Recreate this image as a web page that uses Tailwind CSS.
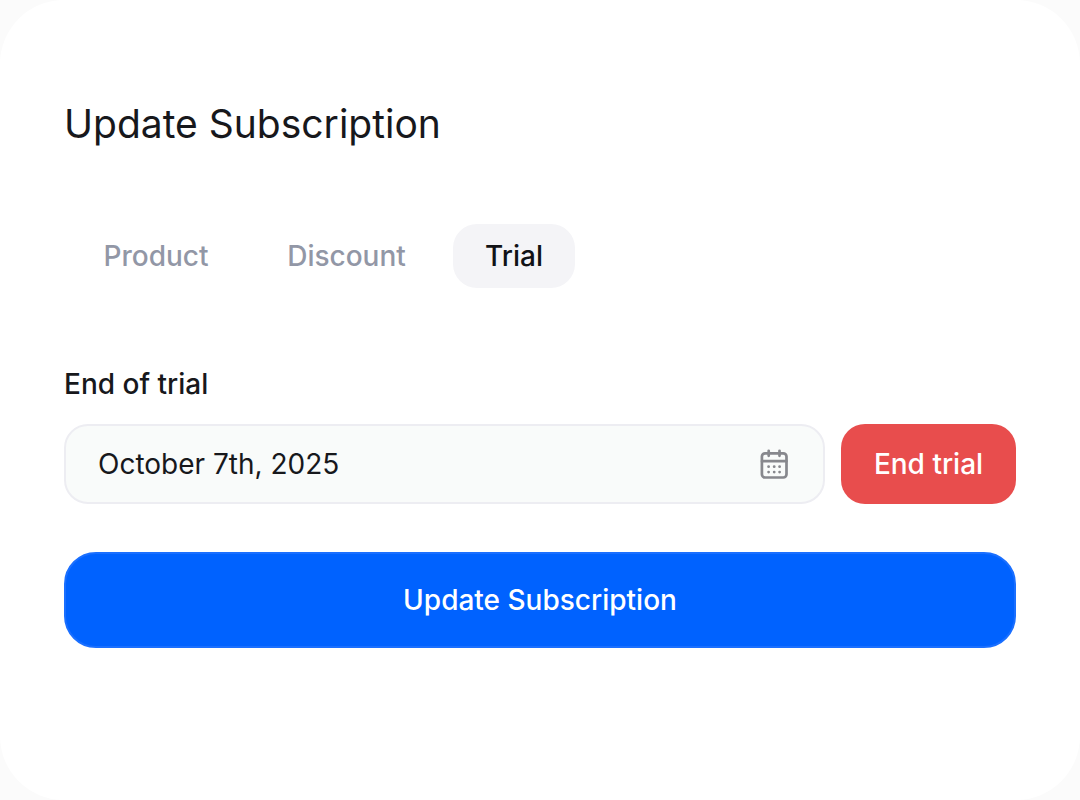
<!DOCTYPE html>
<html lang="en">
<head>
<meta charset="utf-8">
<meta name="viewport" content="width=device-width, initial-scale=1">
<title>Update Subscription</title>
<script src="https://cdn.jsdelivr.net/npm/@tailwindcss/browser@4"></script>
</head>
<body class="bg-[#fbfbfb] font-['Inter',sans-serif] text-[#17181c]">
<main class="min-h-screen rounded-[64px] bg-white px-16 pt-24">
  <h1 class="text-[39px] leading-14">Update Subscription</h1>
  <div role="tablist" aria-label="Subscription settings" class="mt-18 ml-2 flex gap-4 text-[28px] leading-16 font-medium text-[#9297a6]">
    <button type="button" role="tab" aria-selected="false" class="w-42 rounded-3xl">Product</button>
    <button type="button" role="tab" aria-selected="false" class="w-[181px] rounded-3xl">Discount</button>
    <button type="button" role="tab" aria-selected="true" class="w-[122px] rounded-3xl bg-[#f4f4f7] text-[#111216]">Trial</button>
  </div>
  <form class="mt-19">
    <label for="trial-end" class="block text-[28px] leading-10 font-medium">End of trial</label>
    <div class="mt-5 flex gap-4">
      <div class="flex h-20 min-w-0 flex-1 items-center rounded-3xl border-2 border-[#ededf2] bg-[#f9fbfa] px-8">
        <input id="trial-end" type="text" value="October 7th, 2025" class="min-w-0 flex-1 bg-transparent text-[28px] outline-none">
        <button type="button" aria-label="Open calendar" class="text-[#87888d]">
          <svg class="size-8" viewBox="0 0 32 32" fill="none" stroke="currentColor" stroke-width="2.7" stroke-linecap="round" stroke-linejoin="round" aria-hidden="true">
            <rect x="2.9" y="5.3" width="24.6" height="24.2" rx="3.2"/>
            <path d="M3 13.2h24.4M9.7 2.8v5M20.5 2.8v5"/>
            <g fill="currentColor" stroke="none"><circle cx="9.6" cy="18.7" r="1.4"/><circle cx="15.2" cy="18.7" r="1.4"/><circle cx="20.6" cy="18.7" r="1.4"/><circle cx="9.6" cy="24.1" r="1.4"/><circle cx="15.2" cy="24.1" r="1.4"/><circle cx="20.6" cy="24.1" r="1.4"/></g>
          </svg>
        </button>
      </div>
      <button type="button" class="h-20 w-[175px] rounded-3xl bg-[#e84d4d] text-[28px] font-medium text-white">End trial</button>
    </div>
    <button type="submit" class="mt-12 h-24 w-full rounded-[32px] border-2 border-[#1a6fff] bg-[#0062ff] text-[28px] font-medium text-white">Update Subscription</button>
  </form>
</main>
</body>
</html>
